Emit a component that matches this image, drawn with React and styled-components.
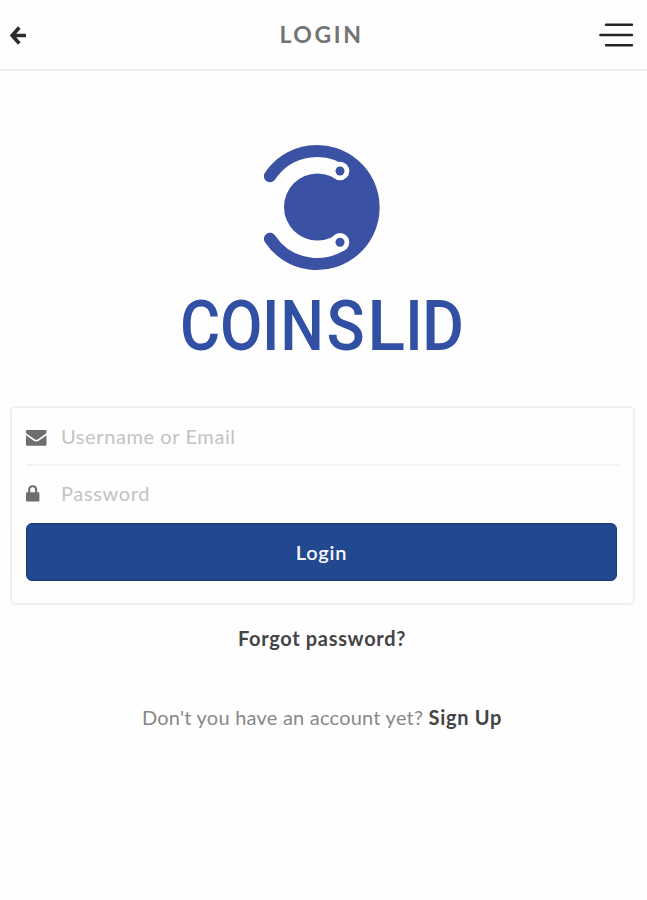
import React from "react";
import styled, { createGlobalStyle } from "styled-components";

const GlobalStyle = createGlobalStyle`
  * { box-sizing: border-box; }
  body { margin: 0; background: #fefefe; font-family: "Lato", "Open Sans", sans-serif; }
`;

const Page = styled.div`
  display: flex;
  flex-direction: column;
  width: 647px;
  height: 900px;
  overflow: hidden;
`;

const Header = styled.header`
  display: grid;
  grid-template-columns: 60px 1fr 60px;
  align-items: center;
  height: 71px;
  padding: 0 13px 0 9px;
  border-bottom: 2px solid #efefef;
`;

const IconButton = styled.button`
  display: flex;
  justify-content: ${(p) => (p.$end ? "flex-end" : "flex-start")};
  padding: 0;
  border: 0;
  background: none;
`;

const Title = styled.h1`
  margin: 0;
  padding: 0 0 1px;
  text-align: center;
  font-size: 23px;
  line-height: 28px;
  font-weight: 700;
  letter-spacing: 2.6px;
  color: #737371;
`;

const Brand = styled.div`
  display: flex;
  justify-content: center;
  height: 335px;
  padding-top: 64px;
`;

const Wordmark = styled.text`
  font-family: "Roboto", sans-serif;
  font-size: 70px;
  font-weight: 500;
  fill: #3150a4;
`;

const Card = styled.form`
  display: flex;
  flex-direction: column;
  width: 625px;
  height: 199px;
  margin-left: 10px;
  padding: 0 13px 0 14px;
  border: 2px solid #f0f0f0;
  border-radius: 5px;
`;

const Field = styled.label`
  display: grid;
  grid-template-columns: 35px 1fr;
  align-items: center;
  height: ${(p) => p.$height}px;
  padding-bottom: ${(p) => (p.$divided ? 0 : 2)}px;
  border-bottom: ${(p) => (p.$divided ? "2px solid #f3f3f3" : "0")};
`;

const Input = styled.input`
  width: 100%;
  padding: 0 0 1px;
  border: 0;
  outline: 0;
  background: none;
  font: 400 20px/26px "Lato", sans-serif;
  letter-spacing: ${(p) => p.$tracking}px;
  &::placeholder { color: #c3c3c3; opacity: 1; }
`;

const Submit = styled.button`
  width: 591px;
  height: 58px;
  padding: 0 0 1px;
  border: 1px solid #153a86;
  border-radius: 6px;
  background: #22488f;
  color: #f5f8ff;
  font: 600 20px/26px "Lato", sans-serif;
  letter-spacing: 0.8px;
`;

const Links = styled.div`
  display: flex;
  flex-direction: column;
  align-items: center;
  gap: 53px;
  padding: 20px 3px 0 0;
`;

const Strong = styled.a`
  font-size: 20px;
  line-height: 26px;
  font-weight: 700;
  letter-spacing: ${(p) => p.$tracking}px;
  color: #444446;
`;

const Prompt = styled.p`
  margin: 0;
  font-size: 20px;
  line-height: 26px;
  letter-spacing: 0.23px;
  color: #888;
  white-space: nowrap;
`;

const BackIcon = () => (
  <svg width="18" height="20" viewBox="0 0 18 20" fill="none" stroke="#2c2c2c" strokeWidth="3.6">
    <path d="M10.3 2.5 3.2 10.5l7.1 8M3.7 10.5H17" />
  </svg>
);

const MenuIcon = () => (
  <svg width="35" height="24" viewBox="0 0 35 24" stroke="#242424" strokeWidth="2.4" strokeLinecap="round">
    <path d="M7 1.7H33M1.4 12H33M7 22.3H33" />
  </svg>
);

const MailIcon = () => (
  <svg width="21" height="20" viewBox="0 -4 21 20" fill="#6e6e70">
    <path d="M.8 0H19.8Q20.5 0 20.5 .8V2.2Q20.5 3.2 18.7 4.6L12 9.3Q10.3 10.4 8.6 9.3L1.8 4.6Q0 3.2 0 2.2V.8Q0 0 .8 0Z" />
    <path d="M0 5.2 7.8 10.7Q10.3 12.3 12.8 10.7L20.5 5.2V14.8Q20.5 15.7 19.7 15.7H.8Q0 15.7 0 14.8Z" />
  </svg>
);

const LockIcon = () => (
  <svg width="14" height="17" viewBox="0 0 14 17">
    <path d="M3.2 8V4.9Q3.2 1.2 6.7 1.2T10.2 4.9V8" fill="none" stroke="#6e6e70" strokeWidth="2.1" />
    <rect x="0" y="7.2" width="13.4" height="9.3" rx="1" fill="#6e6e70" />
  </svg>
);

const LETTERS = [
  ["C", 180, 0.88],
  ["O", 220, 0.88],
  ["I", 262, 0.88],
  ["N", 280.3, 0.88],
  ["S", 326.5, 0.9],
  ["L", 367.3, 1],
  ["I", 405.3, 0.88],
  ["D", 422, 0.92],
];

const Logo = () => (
  <svg width="301" height="260" viewBox="173 135 301 260" role="img" aria-label="COINSLID">
    <g fill="none" stroke="#3b51a3">
      <path d="M270 176.2A56.5 56.5 0 1 1 270 238.8" strokeWidth="12.2" strokeLinecap="round" />
      <path d="M340 170.8A42.8 42.8 0 0 1 340 242.8" strokeWidth="20" />
    </g>
    <circle cx="317.5" cy="207" r="33.5" fill="#3b51a3" />
    {[171, 242.3].map((y) => (
      <g key={y}>
        <circle cx="340" cy={y} r="9.3" fill="#fefefe" />
        <circle cx="340" cy={y} r="4.5" fill="#3b51a3" />
      </g>
    ))}
    {LETTERS.map(([letter, x, scale]) => (
      <Wordmark key={x} transform={`translate(${x} 349.6) scale(${scale} 1)`}>{letter}</Wordmark>
    ))}
  </svg>
);

export default function App() {
  return (
    <>
      <GlobalStyle />
      <Page>
        <Header>
          <IconButton aria-label="Back"><BackIcon /></IconButton>
          <Title>LOGIN</Title>
          <IconButton $end aria-label="Menu"><MenuIcon /></IconButton>
        </Header>
        <Brand><Logo /></Brand>
        <Card onSubmit={(e) => e.preventDefault()}>
          <Field $height={58} $divided>
            <MailIcon />
            <Input placeholder="Username or Email" $tracking={0.6} />
          </Field>
          <Field $height={57}>
            <LockIcon />
            <Input type="password" placeholder="Password" $tracking={0.65} />
          </Field>
          <Submit>Login</Submit>
        </Card>
        <Links>
          <Strong $tracking={0.67}>Forgot password?</Strong>
          <Prompt>Don't you have an account yet? <Strong $tracking={0.7}>Sign Up</Strong></Prompt>
        </Links>
      </Page>
    </>
  );
}
